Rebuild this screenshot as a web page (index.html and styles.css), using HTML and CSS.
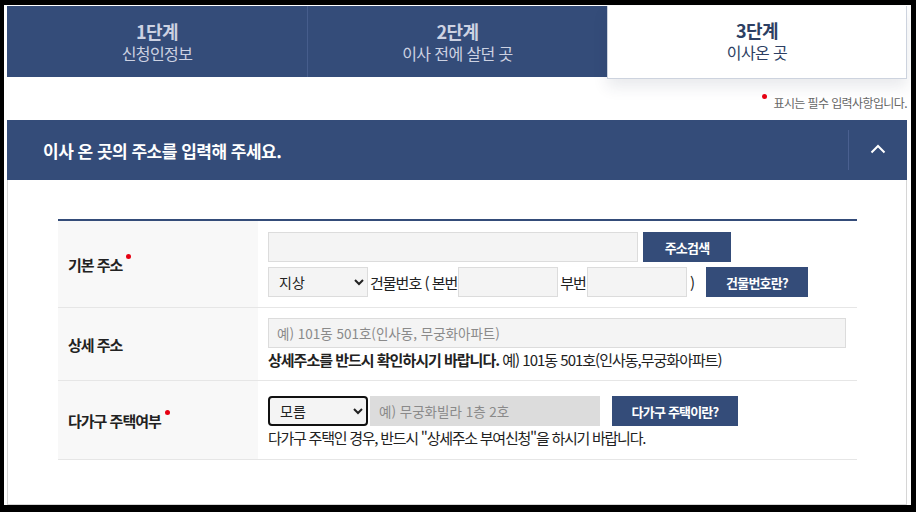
FILE: index.html
```html
<!DOCTYPE html>
<html lang="ko">
<head>
<meta charset="utf-8">
<title>이사 온 곳</title>
<link rel="stylesheet" href="styles.css">
</head>
<body>
<div class="frame">
  <div class="tabs">
    <div class="tab tab-done">
      <strong class="tab-step">1단계</strong>
      <span class="tab-name">신청인정보</span>
    </div>
    <div class="tab tab-done">
      <strong class="tab-step">2단계</strong>
      <span class="tab-name">이사 전에 살던 곳</span>
    </div>
    <div class="tab tab-current">
      <strong class="tab-step">3단계</strong>
      <span class="tab-name">이사온 곳</span>
    </div>
  </div>

  <div class="notice"><span class="req-dot notice-dot"></span>표시는 필수 입력사항입니다.</div>

  <div class="section-head">
    <h2 class="section-title">이사 온 곳의 주소를 입력해 주세요.</h2>
    <button class="toggle" type="button" aria-label="접기">
      <svg width="16" height="10" viewBox="0 0 16 10"><path d="M1.5 8.5 L8 2 L14.5 8.5" fill="none" stroke="#fff" stroke-width="2"/></svg>
    </button>
  </div>

  <div class="section-body">
    <div class="form">
      <div class="row row-basic">
        <div class="label">기본 주소<span class="req-dot"></span></div>
        <div class="value">
          <div class="line">
            <input class="field field-addr" type="text">
            <button class="btn btn-search" type="button">주소검색</button>
          </div>
          <div class="line">
            <select class="sel">
              <option>지상</option>
            </select>
            <span class="txt txt-bldg">건물번호 ( 본번</span>
            <input class="field field-num" type="text">
            <span class="txt txt-sub">부번</span>
            <input class="field field-num" type="text">
            <span class="txt txt-close">)</span>
            <button class="btn btn-bldg" type="button">건물번호란?</button>
          </div>
        </div>
      </div>

      <div class="row row-detail">
        <div class="label">상세 주소</div>
        <div class="value">
          <input class="field field-detail" type="text" placeholder="예) 101동 501호(인사동, 무궁화아파트)">
          <p class="help"><b>상세주소를 반드시 확인하시기 바랍니다.</b> 예) 101동 501호(인사동,무궁화아파트)</p>
        </div>
      </div>

      <div class="row row-multi">
        <div class="label">다가구 주택여부<span class="req-dot"></span></div>
        <div class="value">
          <div class="line">
            <select class="sel sel-focus">
              <option>모름</option>
            </select>
            <input class="field field-disabled" type="text" placeholder="예) 무궁화빌라 1층 2호" disabled>
            <button class="btn btn-multi" type="button">다가구 주택이란?</button>
          </div>
          <p class="help help-plain">다가구 주택인 경우, 반드시 "상세주소 부여신청"을 하시기 바랍니다.</p>
        </div>
      </div>
    </div>
  </div>
</div>
</body>
</html>
```

FILE: styles.css
```css
* { box-sizing: border-box; }

html, body {
  margin: 0;
  padding: 0;
  background: #000;
}

body {
  font-family: "Noto Sans CJK KR", "Noto Sans", sans-serif;
  color: #222;
}

.frame {
  margin: 5px 5px 0 4px;
  width: 907px;
  height: 500px;
  background: #fff;
  padding: 1px 4px 0 3px;
  display: flex;
  flex-direction: column;
}

/* tabs */
.tabs {
  display: flex;
  align-items: flex-start;
  height: 73px;
}

.tab {
  width: 300px;
  display: flex;
  flex-direction: column;
  align-items: center;
  justify-content: center;
  letter-spacing: -0.6px;
}

.tab-done {
  height: 71px;
  background: #344c79;
  color: #cdd2e2;
}

.tab-done + .tab-done {
  border-left: 1px solid #465d8c;
}

.tab-current {
  height: 73px;
  background: #fff;
  color: #2d3f63;
  border: 1px solid #cdd3de;
  border-top: 0;
  box-shadow: 0 8px 14px rgba(40, 50, 80, 0.10);
  padding-bottom: 2px;
}

.tab-step {
  font-size: 18px;
  font-weight: 700;
  line-height: 22px;
}

.tab-name {
  font-size: 16px;
  line-height: 22px;
}

/* notice */
.notice {
  height: 41px;
  display: flex;
  justify-content: flex-end;
  align-items: center;
  padding-top: 6px;
  font-size: 12px;
  letter-spacing: -0.6px;
  color: #666;
}

.req-dot {
  display: inline-block;
  width: 5px;
  height: 5px;
  border-radius: 50%;
  background: #e60012;
  vertical-align: top;
  margin-left: 4px;
  margin-top: -2px;
}

.notice-dot {
  margin: 0 6px 0 0;
  position: relative;
  top: -6px;
}

/* section header */
.section-head {
  height: 60px;
  background: #344c79;
  display: flex;
  align-items: center;
  justify-content: space-between;
  padding-left: 36px;
}

.section-title {
  margin: 0;
  font-size: 17px;
  font-weight: 700;
  color: #fff;
  letter-spacing: -0.5px;
}

.toggle {
  height: 40px;
  width: 59px;
  border: 0;
  border-left: 1px solid #4a6090;
  background: transparent;
  display: flex;
  align-items: center;
  justify-content: center;
  padding: 0 0 2px 0;
}

/* section body */
.section-body {
  flex: 1;
  border: 1px solid #d6d6d6;
  border-top: 0;
  padding: 39px 49px 0 50px;
  width: 900px;
}

.form {
  border-top: 2px solid #344c79;
}

.row {
  display: flex;
  border-bottom: 1px solid #e6e6e6;
}

.label {
  width: 200px;
  flex: none;
  background: #f8f8f8;
  padding-left: 10px;
  display: flex;
  align-items: center;
  font-size: 15px;
  font-weight: 700;
  letter-spacing: -1px;
  color: #222;
}

.label .req-dot {
  align-self: center;
  margin-top: -16px;
}

.value {
  flex: 1;
  padding-left: 10px;
}

.row-basic { height: 87px; }
.row-basic .value { padding-top: 11px; }
.row-basic .line + .line { margin-top: 5px; }

.row-detail { height: 73px; }
.row-detail .value { padding-top: 10px; }

.row-multi { height: 79px; }
.row-multi .value { padding-top: 15px; }

.line {
  display: flex;
  align-items: center;
  height: 30px;
}

.field {
  height: 30px;
  border: 1px solid #dcdcdc;
  background: #f4f4f4;
  font-family: "Noto Sans CJK KR", "Noto Sans", sans-serif;
  font-size: 13.5px;
  padding: 0 8px;
  outline: none;
}

.field::placeholder { color: #8a8a8a; }

.field-addr { width: 370px; }
.field-num { width: 100px; }
.field-detail { width: 578px; display: block; }

.field-disabled {
  width: 230px;
  margin-left: 2px;
  background: #dcdcdc;
  border-color: #dcdcdc;
}

.txt {
  font-size: 15px;
  letter-spacing: -1px;
  color: #222;
}

.txt-bldg { margin: 0 1px 0 2px; }
.txt-sub { margin: 0 1px 0 2px; }
.txt-close { margin: 0 0 0 3px; }

.sel {
  width: 100px;
  height: 30px;
  border: 1px solid #dcdcdc;
  background: #f4f4f4;
  font-family: "Noto Sans CJK KR", "Noto Sans", sans-serif;
  font-size: 14px;
  color: #222;
  padding-left: 6px;
  border-radius: 0;
}

.sel-focus {
  border: 2px solid #111;
  border-radius: 4px;
}

.btn {
  height: 30px;
  border: 0;
  background: #344c79;
  color: #fff;
  font-family: "Noto Sans CJK KR", "Noto Sans", sans-serif;
  font-size: 13px;
  font-weight: 700;
  letter-spacing: -0.8px;
  padding: 0;
}

.btn-search { width: 88px; margin-left: 5px; }
.btn-bldg { width: 102px; margin-left: 12px; }
.btn-multi { width: 126px; margin-left: 12px; }

.help {
  margin: 2px 0 0;
  font-size: 15px;
  line-height: 20px;
  letter-spacing: -1px;
  color: #222;
}

.help b { font-weight: 700; }
.help-plain { margin-top: 2px; letter-spacing: -1.25px; }
```
